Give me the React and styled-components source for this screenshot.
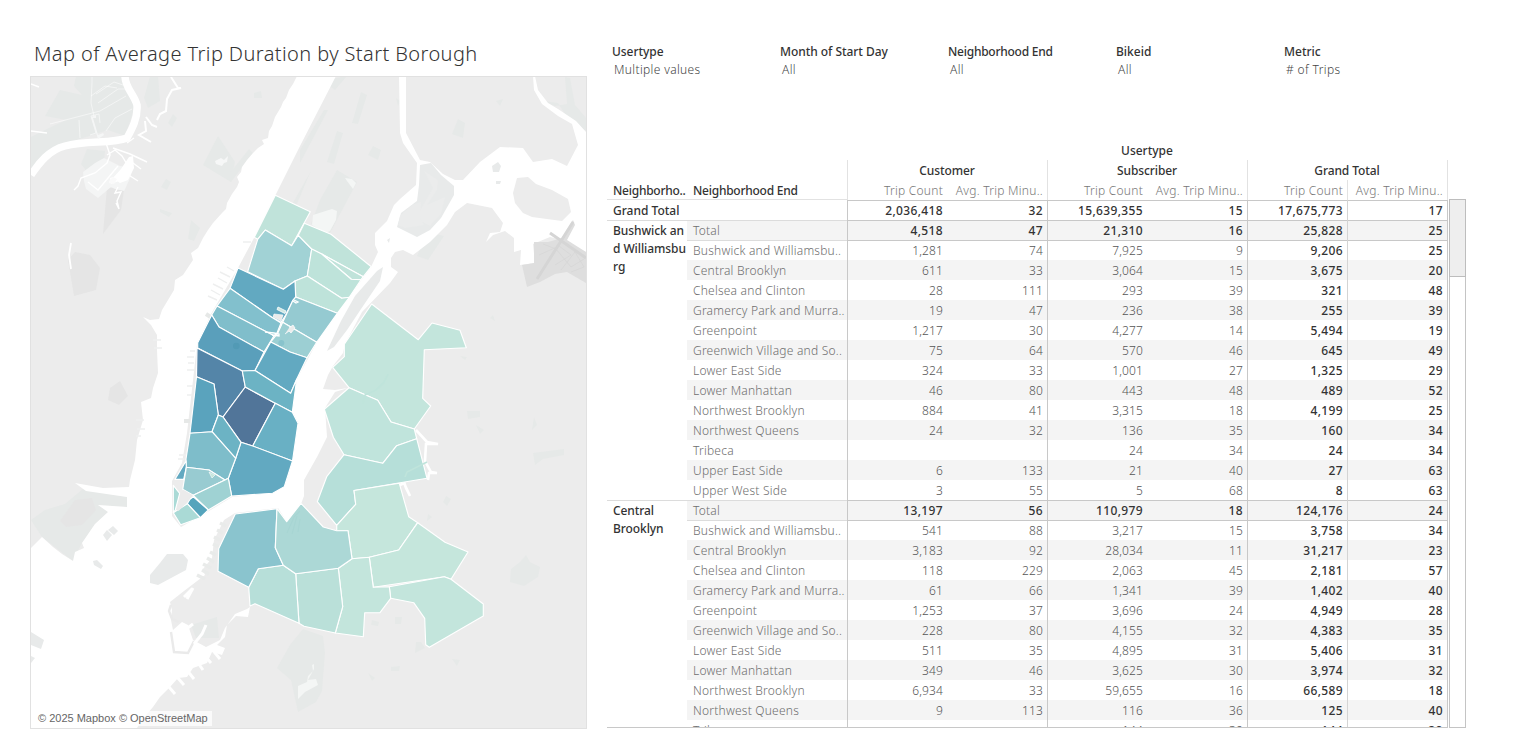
import React from "react";
import styled, { createGlobalStyle } from "styled-components";

const GlobalStyle = createGlobalStyle`
  body {
    margin: 0;
    background: #fff;
    color: #333;
    font: 400 12px/20px "Noto Sans", "Open Sans", sans-serif;
    overflow: hidden;
  }
`;

const Page = styled.main`
  display: flex;
  gap: 19px;
  box-sizing: border-box;
  width: 1534px;
  height: 751px;
  padding: 39px 0 0 30px;
`;

const MapPanel = styled.section`
  flex: 0 0 558px;
`;

const Title = styled.h1`
  margin: 0 0 7px 4px;
  font-size: 20px;
  line-height: 30px;
  font-weight: 300;
  letter-spacing: 0.4px;
  white-space: nowrap;
`;

const MapFrame = styled.div`
  position: relative;
  box-sizing: border-box;
  width: 557px;
  height: 653px;
  border: 1px solid #e1e1e1;
  overflow: hidden;
  svg {
    display: block;
  }
`;

const Attribution = styled.div`
  position: absolute;
  left: 3px;
  bottom: 2px;
  padding: 0 4px;
  background: rgba(255, 255, 255, 0.75);
  color: #666;
  font: 11px/15px "Liberation Sans", Arial, sans-serif;
  white-space: nowrap;
`;

const Side = styled.section`
  width: 860px;
`;

const Filters = styled.div`
  display: grid;
  grid-template-columns: repeat(5, 168px);
  height: 102px;
  padding: 4px 0 0 5px;
  box-sizing: border-box;
`;

const FilterName = styled.div`
  line-height: 18px;
  font-weight: 500;
  letter-spacing: ${(p) => p.$spacing}px;
`;

const FilterValue = styled.div`
  padding-left: 2px;
  line-height: 18px;
  font-weight: 300;
  color: #444;
  letter-spacing: 0.35px;
`;

const TableArea = styled.div`
  display: grid;
  grid-template-columns: 841px 17px;
  gap: 1px;
`;

const Table = styled.div`
  width: 841px;
  height: 587px;
  box-sizing: border-box;
  overflow: hidden;
  border-bottom: 1px solid #c8c8c8;
`;

const UserTypeHead = styled.div`
  height: 19px;
  margin-left: 240px;
  width: 600px;
  text-align: center;
  line-height: 20px;
  font-weight: 500;
`;

const GroupHead = styled.div`
  display: grid;
  grid-template-columns: 240px repeat(3, 200px);
  height: 20px;
`;

const Cell = styled.div`
  box-sizing: border-box;
  height: 20px;
  padding-top: 1px;
  white-space: nowrap;
`;

const GroupName = styled(Cell)`
  text-align: center;
  font-weight: 500;
  letter-spacing: -0.1px;
  box-shadow: inset 1px 0 #e2e2e2${(p) => (p.$last ? ", 1px 0 #e2e2e2" : "")};
`;

const ColumnHead = styled.div`
  display: grid;
  grid-template-columns: 80px 160px repeat(6, 100px);
  height: 20px;
`;

const DimensionName = styled(Cell)`
  padding-left: 6px;
  font-weight: 500;
  letter-spacing: -0.25px;
  box-shadow: inset 0 -1px #e2e2e2;
`;

const MeasureName = styled(Cell)`
  padding-right: 4px;
  text-align: right;
  font-weight: 300;
  color: #777;
  letter-spacing: 0.25px;
  box-shadow: ${(p) => (p.$line ? "inset 1px 0 #e2e2e2" : "inset 0 0 #e2e2e2")}${(p) => (p.$last ? ", 1px 0 #e2e2e2" : "")};
`;

const TotalRow = styled.div`
  display: grid;
  grid-template-columns: 240px repeat(6, 100px);
  height: 20px;
`;

const TotalName = styled(Cell)`
  padding-left: 6px;
  font-weight: 500;
`;

const Group = styled.div`
  display: grid;
  grid-template-columns: 80px 760px;
`;

const GroupLabel = styled.div`
  padding: 2px 0 0 6px;
  line-height: 18px;
  font-weight: 500;
  white-space: nowrap;
  letter-spacing: -0.08px;
  box-shadow: inset 0 1px #dcdcdc;
`;

const Row = styled.div`
  display: grid;
  grid-template-columns: 160px repeat(6, 100px);
  height: 20px;
  background: ${(p) => (p.$band ? "#f4f4f4" : "#fff")};
`;

const RowName = styled(Cell)`
  padding-left: 6px;
  font-weight: 300;
  color: #6e6e6e;
  letter-spacing: 0.22px;
  box-shadow: ${(p) => (p.$top ? "inset 0 1px #dcdcdc" : "none")};
`;

const Value = styled(Cell)`
  padding-right: 4px;
  text-align: right;
  font-weight: ${(p) => (p.$bold ? 500 : 300)};
  color: ${(p) => (p.$bold ? "#333" : "#555")};
  letter-spacing: ${(p) => (p.$bold ? 0.35 : 0.15)}px;
  box-shadow: ${(p) =>
    [
      p.$line && `inset 1px 0 ${p.$line}`,
      p.$top && "inset 0 1px #c8c8c8",
      p.$last && "1px 0 #c8c8c8",
    ]
      .filter(Boolean)
      .join(", ") || "none"};
`;

const ScrollTrack = styled.div`
  box-sizing: border-box;
  width: 17px;
  height: 529px;
  margin-top: 58px;
  border: 1px solid #c4c4c4;
`;

const ScrollThumb = styled.div`
  box-sizing: border-box;
  width: 17px;
  height: 78px;
  margin: -1px;
  border: 1px solid #bdbdbd;
  background: #eee;
`;

const lineColors = ["#c8c8c8", null, "#c8c8c8", null, "#c8c8c8", "#d4d4d4"];

const groups = [
  {
    label: ["Bushwick an", "d Williamsbu", "rg"],
    rows: [
      ["Total", "4,518", "47", "21,310", "16", "25,828", "25"],
      ["Bushwick and Williamsbu..", "1,281", "74", "7,925", "9", "9,206", "25"],
      ["Central Brooklyn", "611", "33", "3,064", "15", "3,675", "20"],
      ["Chelsea and Clinton", "28", "111", "293", "39", "321", "48"],
      ["Gramercy Park and Murra..", "19", "47", "236", "38", "255", "39"],
      ["Greenpoint", "1,217", "30", "4,277", "14", "5,494", "19"],
      ["Greenwich Village and So..", "75", "64", "570", "46", "645", "49"],
      ["Lower East Side", "324", "33", "1,001", "27", "1,325", "29"],
      ["Lower Manhattan", "46", "80", "443", "48", "489", "52"],
      ["Northwest Brooklyn", "884", "41", "3,315", "18", "4,199", "25"],
      ["Northwest Queens", "24", "32", "136", "35", "160", "34"],
      ["Tribeca", "", "", "24", "34", "24", "34"],
      ["Upper East Side", "6", "133", "21", "40", "27", "63"],
      ["Upper West Side", "3", "55", "5", "68", "8", "63"],
    ],
  },
  {
    label: ["Central", "Brooklyn"],
    rows: [
      ["Total", "13,197", "56", "110,979", "18", "124,176", "24"],
      ["Bushwick and Williamsbu..", "541", "88", "3,217", "15", "3,758", "34"],
      ["Central Brooklyn", "3,183", "92", "28,034", "11", "31,217", "23"],
      ["Chelsea and Clinton", "118", "229", "2,063", "45", "2,181", "57"],
      ["Gramercy Park and Murra..", "61", "66", "1,341", "39", "1,402", "40"],
      ["Greenpoint", "1,253", "37", "3,696", "24", "4,949", "28"],
      ["Greenwich Village and So..", "228", "80", "4,155", "32", "4,383", "35"],
      ["Lower East Side", "511", "35", "4,895", "31", "5,406", "31"],
      ["Lower Manhattan", "349", "46", "3,625", "30", "3,974", "32"],
      ["Northwest Brooklyn", "6,934", "33", "59,655", "16", "66,589", "18"],
      ["Northwest Queens", "9", "113", "116", "36", "125", "40"],
      ["Tribeca", "", "", "144", "39", "144", "39"],
    ],
  },
];

const water = [
  // Hudson, Upper Bay, East River and the Long Island Sound
  "297,76 293,84 289,90 286,98 283,102 281,107 275,117 272,126 269,131 268,138 262,140 264,144 258,148 253,153 247,160 242,167 241,172 237,177 239,182 237,187 232,194 227,203 226,209 222,213 213,223 208,230 203,238 198,248 191,253 193,260 183,275 175,280 174,290 168,300 162,310 159,319 150,320 143,317 151,325 157,335 157,350 158,373 153,388 151,398 141,402 143,420 137,440 135,460 130,480 129,487 103,488 75,483 86,491 127,497 127,507 98,505 108,512 95,524 82,543 84,548 75,552 73,561 62,554 53,547 42,537 31,548 31,728 137,728 141,721 153,707 160,697 170,687 178,678 187,677 193,668 207,663 212,652 222,655 225,648 217,645 225,637 227,625 236,616 248,617 250,607 247,609 235,614 225,628 220,640 206,647 193,640 188,625 182,622 173,630 171,620 172,610 170,602 184,591 205,575 203,569 212,558 214,540 224,520 235,513 278,508 287,522 301,504 304,496 304,480 317,457 327,437 325,408 335,392 348,388 335,390 323,389 328,375 333,366 343,353 345,344 362,312 390,283 398,272 391,267 391,258 395,252 403,250 413,255 430,242 447,225 455,212 467,203 492,208 503,223 500,232 490,233 486,242 493,235 505,231 514,238 514,252 521,250 520,265 535,263 533,244 550,237 562,240 586,252 586,132 576,121 558,109 548,103 538,90 535,76 533,76 534,90 542,104 558,116 572,124 578,145 567,166 552,159 533,162 523,148 500,147 480,162 463,180 455,180 443,174 430,162 420,160 406,133 406,76 399,76 400,133 403,143 417,163 416,185 400,199 394,205 387,221 375,233 375,245 378,252 371,267 337,313 317,342 297,379 292,411 298,423 292,461 284,487 272,493 232,497 209,511 181,527 172,516 172,481 182,463 187,433 197,345 211,314 238,268 254,238 300,146 336,76",
];

const islands = [
  "420,165 431,163 441,175 454,186 454,195 441,218 430,230 417,237 397,227 401,213 417,201 419,185",
  "513,193 517,178 528,177 536,184 552,190 568,199 571,212 562,221 532,217 523,213 515,203",
  "492,166 498,162 501,166 499,172 493,172",
  "496,181 501,181 500,184 496,184",
  "387,240 390,238 389,243",
  "383,267 377,271 355,296 341,321 327,351 334,347 347,330 361,309 380,281",
  "167,554 183,554 188,560 186,570 158,585 150,583 150,575 160,563",
  "103,535 107,530 112,535 107,541",
  "108,530 113,526 118,531 114,535",
  "93,561 97,560 103,566 101,569 94,565",
  "31,632 44,640 41,649 31,645",
  "31,656 35,658 31,663",
];

const parks = [
  "337,170 357,182 330,233 311,224 320,200",
  "31,137 31,175 53,148 80,139 108,130 125,136 135,107 124,76 76,76 74,86 82,95 60,90 45,116 66,120 49,128",
  "87,149 105,151 103,170 88,173 81,164",
  "150,76 158,76 160,101 148,108 144,98",
  "218,136 235,162 231,182 203,165",
  "31,520 45,510 65,504 83,489 127,497 127,507 98,505 108,512 95,524 82,543 73,561 42,537",
  "303,629 323,636 325,653 322,691 316,702 298,712 291,680 277,668 290,645",
  "332,79 347,76 335,90 328,85",
  "324,110 328,110 300,163 300,150",
  "361,92 367,95 358,124 352,123",
  "337,131 343,133 334,164 327,162",
  "458,119 465,123 463,138 452,134",
  "373,146 381,150 378,160 368,155",
  "543,101 558,103 568,119 572,124 586,131 586,118 575,105 570,78 565,77 567,104 555,106",
  "533,453 564,449 564,455 543,459 535,465",
  "467,411 480,411 480,417 468,419",
  "532,430 534,417 537,425",
  "428,232 444,236 428,260 417,256",
  "249,149 253,153 231,182 229,174",
  "311,171 307,180 285,232 279,234 290,208",
  "191,220 200,228 194,241 188,239",
  "191,625 217,617 219,638 196,638",
  "252,176 248,192 235,194 240,183",
  "173,114 177,118 172,127 168,123",
  "166,179 171,182 167,190 161,187",
  "160,209 172,213 169,217 160,212",
  "254,93 261,91 262,98 254,98",
  "496,101 503,99 500,106",
  "396,98 400,101 398,106",
  "452,565 458,565 456,572",
  "416,642 421,642 425,648 415,653",
  "452,659 460,660 457,666",
  "446,496 451,499 447,506 443,502",
  "428,514 432,517 427,521",
  "395,617 402,617 401,624 395,624",
  "372,620 379,622 378,626 371,625",
  "391,667 400,666 399,671 391,671",
  "368,673 375,678 372,681",
  "511,569 520,562 526,555 530,562 540,567 538,577 524,586 510,582",
  "493,315 495,321 490,318",
  "476,425 484,430 480,434",
  "460,356 467,357 465,360",
];

const shade = [
  "107,187 124,190 121,210 103,234",
  "68,260 75,252 90,255 100,268 96,290 74,296",
  "60,521 75,500 92,498 96,510 82,525 66,527",
  "110,388 120,381 128,396 119,405 108,400",
];

const districts = [
  ["#c0e3da", "275.3,195.3 310.3,211.7 291.7,245.7 265.3,230 257.7,239.3 254.3,237.3"],
  ["#a1d2d5", "265.3,230 291.7,245.7 298.3,235.3 311.7,249 307.3,276 295,281 283.3,289.3 247.7,271.7 257.7,239.3"],
  ["#c0e3da", "304.3,223.3 331,234.3 371.3,266.7 363.3,276.7 321.7,254 311.7,249 298.3,235.3"],
  ["#c0e3da", "321.7,254 363.3,276.7 361,279.7 351.3,279.3"],
  ["#bee3da", "311.7,249 321.7,254 351.3,279.3 361,279.7 349.3,297.3 341.7,298.3 307.3,276"],
  ["#bee3da", "307.3,276 341.7,298.3 349.3,297.3 337.3,313.3 295.7,297 295,281"],
  ["#62a9c1", "238,268 283.3,289.3 295,281 295.7,297 292.7,300.7 285.7,315 281,322.3 271.7,317.3 230,288.3"],
  ["#82c0cd", "230,288.3 271.7,317.3 281,323 277,333 274,335.7 217,306"],
  ["#80becb", "217,306 274,335.7 264,352 219,327 211.7,315"],
  ["#5a9fbb", "211.7,315 219,327 264,352 255,370.5 242.3,371 197.7,348 197.7,342.7"],
  ["#5485a8", "197,348 242.3,371 245.3,387 223,417 218.3,415 214,384 196.5,376.7"],
  ["#517599", "245.3,387 275.3,403.3 252.7,446 241,442.3 223,417"],
  ["#95cad1", "295.7,297 337.3,313.3 316.7,342.3 282.7,322.3 292.7,300.7"],
  ["#9ccfd3", "282.7,322.3 316.7,342.3 307,357.7 290,352 270.7,342 277.7,333.3"],
  ["#62a9c1", "270.7,342 290,352 307,357.7 296.7,379.2 290.7,393.3 255,370.5"],
  ["#6cb3c4", "255,370.5 290.7,393.3 296.7,379.2 292.3,412.3 275.3,403.3 245.3,387 242.3,371"],
  ["#69b0c4", "275.3,403.3 292.3,412.3 298,423.3 292.5,461 252.7,446"],
  ["#62a9c1", "241,442.3 252.7,446 292.5,461 284.3,486.7 272.7,493.3 231.7,496 228.3,478.3 235.7,458.3"],
  ["#5aa3bd", "196.5,376.7 214,384 218.3,415 212,431.7 190,433.3"],
  ["#6cb3c4", "218.3,415 223,417 241,442.3 235.7,458.3 212,431.7"],
  ["#7ebdca", "190,433.3 212,431.7 235.7,458.3 228.3,478.3 225,480 209,470 186.3,467.3 186,459"],
  ["#62a9c1", "186,461 186.3,467.3 183.7,479.3 175,479.3"],
  ["#98cbd1", "186.3,467.3 209,470 225,480 193.3,495.3 182.7,489.3"],
  ["#9fd2d3", "225,480 228.3,478.3 231.7,496 208.3,510 193.3,495.3"],
  ["#55a4bc", "190,499.3 193.3,496.7 208.3,510 200.3,517.7 187.3,503.7"],
  ["#aadad6", "187.3,503.7 200.3,517.7 180.7,524.7 173.3,512.7"],
  ["#aadad6", "173.3,485.3 179.7,493.3 175.3,510 173.3,512.7"],
  ["#c3e5dc", "371.7,304 418.3,339.7 432,323 460,330.3 466.3,347.7 424.3,349.7 422.7,398.3 430.7,406 414.3,429 391,422 377.7,400.3 349,387.7 332.7,367.3 344.3,356.7 344.3,344.3"],
  ["#c0e4dc", "349,387.7 377.7,400.3 391,422 414.3,429 416.7,438.7 396.7,445.7 382.7,463.3 344,454.7 333.3,437.3 324.3,409.3"],
  ["#b6dfd9", "344,454.7 382.7,463.3 396.7,445.7 416.7,438.7 427,478.3 354,490.5 355.7,504.3 336.7,525.3 317.3,501.7 326.7,476.7"],
  ["#c5e6dc", "354,490.5 399.3,483.3 408.7,516.7 417.7,522.7 398.7,550 369.3,557.3 352,558.7 348,530.7 336.7,530.7 336.7,525.3 355.7,504.3"],
  ["#c5e6dc", "417.7,522.7 445,542.3 468,552 451,579.3 444.3,576.7 373.3,587.3 369.3,557.3 398.7,550"],
  ["#c3e5dc", "444.3,576.7 451,579.3 483.3,604 483.3,616 429.3,647.3 425.7,644.7 424.7,618.3 413.7,602.7 390.7,598.3 389.3,586.7"],
  ["#c3e5dc", "352,558.7 369.3,557.3 373.3,587.3 389.3,586.7 390.7,598.3 380,612.7 364.7,612.7 363.3,636.7 335.3,633 342.7,606.7 338.3,568.3"],
  ["#bae0d9", "295.7,573.7 338.3,568.3 342.7,606.7 335.3,633 304,626.3 299,623.3"],
  ["#b7dfd9", "248.7,587.3 258.3,568.7 283.3,565.3 295.7,573.7 299,623.3 255,603.7 250,606"],
  ["#8ac4ce", "235.3,514 277,508.7 275.3,547.7 283.3,565.3 258.3,568.7 248.7,587.3 218,571.3 218.7,548.7"],
  ["#acd8d6", "277,508.7 286.7,521.7 301,503.3 323.3,527 336.7,530.7 348,530.7 352,558.7 338.3,568.3 295.7,573.7 283.3,565.3 275.3,547.7"],
];

function BoroughMap() {
  return (
    <svg width="555" height="651" viewBox="31 77 555 651">
      <rect x="31" y="77" width="555" height="651" fill="#ececec" />
      {parks.map((p, i) => <polygon key={i} points={p} fill="#e6e9e8" />)}
      {water.map((p, i) => <polygon key={i} points={p} fill="#fff" />)}
      {islands.map((p, i) => <polygon key={i} points={p} fill={i === 1 ? "#ececec" : "#e8eaea"} />)}
      <polygon points="424,171 438,180 437,190 427,205 445,197 441,214 430,226 419,220 418,214 433,188" fill="#ebecec" />
      <polygon points="400,216 412,205 421,202 420,218 424,225 405,228 398,225" fill="#ebecec" />
      {shade.map((p, i) => <polygon key={i} points={p} fill="#e5e5e5" />)}
      {/* airport apron and runways */}
      <polygon points="534,242 548,242 562,238 573,220 575,225 567,240 586,252 586,283 567,272 555,274 540,282 527,287 522,265 534,263" fill="#dedede" />
      <g fill="none" stroke="#d5d5d5">
        <path d="M537 279 573 222M550 233 586 258" strokeWidth="3" />
        <path d="M543 244l13 5 15 18 13-8M539 255l20-9 12 9-16 10M561 270l14-18 9 15-13 5" strokeWidth=".7" />
      </g>
      {/* Hackensack and Passaic rivers with the marsh channels */}
      <path d="M125 76c0 12 9 18 12 29 1 13-5 24-10 33-15 6-40 2-62 8-16 4-26 17-34 29" fill="none" stroke="#fff" strokeWidth="7.5" />
      <path d="M84 181l-1-9 12-9 9-5 16 8 12 2-1 8-5 11-2 4-9-2-4-2-13 11-12-9z" fill="#f4f5f5" />
      <path d="M121 169l8-12 4-1 1 12-6 12-8 3-7-5z" fill="#fff" />
      <g fill="none" stroke="#fff" strokeWidth="1.4">
        <path d="M106 143l4 12-3 8-12 10-14 5-3 8-4 4M107 155l8-5 7 6 6 10M113 148l17 6 17 8M129 160l12 9M127 174l11 7M88 182l10 8 10-12 10-12M118 187l-3 6 6-1-4 9 2 8-3-6M127 143l7-5" />
        <path d="M171 77l7 11 3 0-9 2-5 9-1 12-6 3-3 6M145 121l1 10-7 4 12 7M146 117l6 8 5 2" strokeWidth="2" />
        <path d="M71 243l-2 12 2 14" strokeWidth="1.8" />
        <path d="M31 131l16 2M31 84l8 3" />
        <path d="M94 116l-3-13 1-20 0-6M91 96l14-10 12 2M98 103l20-14 10 0M96 94l18-12 9 3M79 120l1 18M50 124l50-13 26-15M90 135l6-2-5-17 8-2 1 9M106 131l9-13 17-9" strokeWidth=".8" opacity=".65" />
      </g>
      <path d="M152 160M110 178l7-2 2 5-8 3z" fill="#fff" />
      <path d="M91 117l5-2 0 3-3 0 5 17 5-2 1 2-6 4z" fill="#f5f6f6" />
      <path d="M109 181l4-4 4 2-3 5-5-1z" fill="#fafafa" />
      <path d="M215 161l6-3 3 2 4-4-1 6-3 1-2 3-6-2z" fill="#f6f7f7" />
      {/* lakes inside the parks */}
      <path d="M313 215l19-6 5 2-1 9-6 11-4 2-14-8zM345 178l7 1 4 4-3 6-6-8zM298 686l9-4 1-6 5-5-1-6 2-1 0 5-6 11 8-1 2 6-13 7-7 7z" fill="#f4f6f5" />
      {/* wharves along the Hudson and the Brooklyn waterfront */}
      <g stroke="#eeefef" strokeWidth="1.4" fill="none">
        <path d="M234 271l-7-4M230 277l-10-5M227 283l-9-5M223 289l-10-5M220 295l-9-5M217 300l-9-4M195 351h-5M194 357h-7M194 363h-6M195 370h-8M193 386h-6M192 395h-5M187 455h-8M184 459h-6M243 242h8M136 420h8M137 429h8M136 436h5M153 340h8M154 348h8" />
        <path d="M206 314l6 4M184 421h6" stroke="#e6e8e7" strokeWidth="4" />
        <path d="M220 523l6 3M217 530l6 3M214 537l6 3M213 544l6 3M210 552l6 3M207 558l7 4M203 564l8 4M202 570l7 4M197 575l8 4" stroke="#e9ebea" strokeWidth="3.5" />
        <path d="M171 632l3 20 14 1 6-12M171 605l-2 6 3 8 7 3" stroke="#eaeaea" strokeWidth="2.4" />
      </g>
      <g stroke="#fff" strokeWidth="3" fill="none">
        <path d="M177 677l7 8M186 669l8 10M196 660l7 10M204 655l7 8M211 648l9 11M169 687l6 7M184 597l8-8M193 588l-6 11M194 644l8-10 4-9M181 633l12-9" />
      </g>
      <path d="M416 430l11 12 11 2-12 0-1 17 6 11 6 1-8 0-1 7M403 479l3 9 4 8-6-13-8 4" fill="none" stroke="#fff" strokeWidth="2.6" />
      <g stroke="#fff" strokeWidth="1.15" strokeLinejoin="round">
        {districts.map(([fill, points], i) => <polygon key={i} fill={fill} points={points} />)}
      </g>
      <path d="M180.5 493l3-3 9 5-6 8-8 8-2-1z" fill="#ebebeb" />
      <path d="M274 314l9 1-2 6-8-4z" fill="#ebebeb" stroke="#fff" strokeWidth=".6" />
      <path d="M278 307l8 4-1 2.500-8-4z" fill="#cfe8e2" stroke="#fff" strokeWidth=".8" />
      <path d="M289 328l4-3 2 3-4 5-2-2-4 3" fill="#ececec" stroke="#fff" strokeWidth=".7" />
      <path d="M209 472l6 3-3 3z" fill="#c4e5da" stroke="#fff" strokeWidth=".6" />
      <path d="M265 332l9 1 5 1 0 2-7-1M294 300l4 2-2 1-3-2" fill="none" stroke="#fff" strokeWidth="1.3" />
      <circle cx="236.300" cy="346" r="3.3" fill="#529ab5" />
      <circle cx="281.3" cy="343" r="3" fill="#88c3cc" />
      <path d="M388 374l-4 8-8 8-11 5-2 9M427 462l-20 10-2 5" fill="none" stroke="#bfe4db" strokeWidth="1.6" />
      <path d="M287 533l7-16 6-6M292 534l5-18M298 532l2-13" stroke="#a7d5d3" strokeWidth="1.1" fill="none" />
    </svg>
  );
}

const filters = [
  ["Usertype", "Multiple values", -0.05],
  ["Month of Start Day", "All", -0.05],
  ["Neighborhood End", "All", -0.25],
  ["Bikeid", "All", 0],
  ["Metric", "# of Trips", 0],
];

function Values({ values, bold, top }) {
  return values.map((v, i) => (
    <Value key={i} $bold={bold || i > 3} $line={lineColors[i]} $top={top} $last={i === 5}>
      {v}
    </Value>
  ));
}

export default function App() {
  return (
    <>
      <GlobalStyle />
      <Page>
        <MapPanel>
          <Title>Map of Average Trip Duration by Start Borough</Title>
          <MapFrame>
            <BoroughMap />
            <Attribution>© 2025 Mapbox © OpenStreetMap</Attribution>
          </MapFrame>
        </MapPanel>
        <Side>
          <Filters>
            {filters.map(([name, value, spacing]) => (
              <div key={name}>
                <FilterName $spacing={spacing}>{name}</FilterName>
                <FilterValue>{value}</FilterValue>
              </div>
            ))}
          </Filters>
          <TableArea>
            <Table>
              <UserTypeHead>Usertype</UserTypeHead>
              <GroupHead>
                <span />
                <GroupName>Customer</GroupName>
                <GroupName>Subscriber</GroupName>
                <GroupName $last>Grand Total</GroupName>
              </GroupHead>
              <ColumnHead>
                <DimensionName>Neighborho..</DimensionName>
                <DimensionName>Neighborhood End</DimensionName>
                {[0, 1, 2, 3, 4, 5].map((i) => (
                  <MeasureName key={i} $line={lineColors[i]} $last={i === 5}>
                    {i % 2 ? "Avg. Trip Minu.." : "Trip Count"}
                  </MeasureName>
                ))}
              </ColumnHead>
              <TotalRow>
                <TotalName>Grand Total</TotalName>
                <Values bold top values={["2,036,418", "32", "15,639,355", "15", "17,675,773", "17"]} />
              </TotalRow>
              {groups.map((g) => (
                <Group key={g.label[0]}>
                  <GroupLabel>
                    {g.label.map((l) => <div key={l}>{l}</div>)}
                  </GroupLabel>
                  <div>
                    {g.rows.map(([name, ...values], i) => (
                      <Row key={name} $band={i % 2 === 0}>
                        <RowName $top={i < 2}>{name}</RowName>
                        <Values values={values} bold={i === 0} top={i < 2} />
                      </Row>
                    ))}
                  </div>
                </Group>
              ))}
            </Table>
            <ScrollTrack>
              <ScrollThumb />
            </ScrollTrack>
          </TableArea>
        </Side>
      </Page>
    </>
  );
}
